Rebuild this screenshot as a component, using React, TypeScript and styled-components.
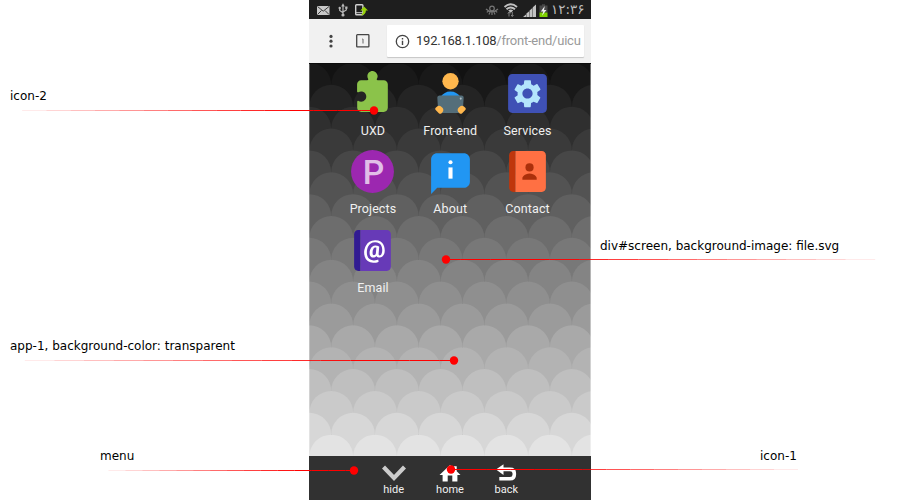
import React from 'react';
import styled, { createGlobalStyle } from 'styled-components';
import {
  FcPuzzle,
  FcReadingEbook,
  FcAutomatic,
  FcAbout,
  FcContacts,
  FcAddressBook,
} from 'react-icons/fc';

const GlobalStyle = createGlobalStyle`
  body { margin: 0; background: #fff; overflow: hidden; }
`;

const Page = styled.main`
  position: relative;
  display: flex;
  justify-content: center;
  width: 900px;
  height: 500px;
  background: #fff;
`;

const Phone = styled.section`
  isolation: isolate;
  display: flex;
  flex-direction: column;
  width: 282px;
  height: 500px;
`;

const StatusBar = styled.header`
  display: flex;
  justify-content: space-between;
  height: 19px;
  background: #1e1e1e;
`;

const StatusIcons = styled.svg`
  display: block;
  height: 19px;
`;

const StatusRight = styled.div`
  display: flex;
  padding-right: 8px;
`;

const Clock = styled.span`
  width: 32px;
  margin-left: 3px;
  font: 13.5px/18px 'DejaVu Sans', sans-serif;
  letter-spacing: -0.9px;
  color: #bdbdbd;
  text-align: right;
  white-space: nowrap;
`;

const BrowserBar = styled.div`
  display: flex;
  align-items: center;
  box-sizing: border-box;
  height: 45px;
  padding: 0 6px 0 13px;
  background: #f1f1f1;
  border-bottom: 1px solid #0c0c0c;
  font-family: Roboto, sans-serif;
`;

const BrowserIcon = styled.svg<{ $gap: number }>`
  display: block;
  flex: none;
  margin-right: ${(p) => p.$gap}px;
`;

const AddressBox = styled.div`
  display: flex;
  align-items: center;
  box-sizing: border-box;
  width: 197px;
  height: 32px;
  padding: 0 5px 0 8px;
  background: #fff;
  border-radius: 1px;
  box-shadow: 0 1px 1px rgba(0, 0, 0, 0.18);
`;

const Url = styled.span`
  flex: 1;
  font-size: 13px;
  letter-spacing: -0.23px;
  line-height: 18px;
  white-space: nowrap;
  color: #9a9a9a;
`;

const Host = styled.span`
  color: #333;
`;

const Screen = styled.div`
  display: grid;
  height: 392px;
  overflow: hidden;
`;

const Wallpaper = styled.svg`
  grid-area: 1 / 1;
  display: block;
`;

const AppGrid = styled.div`
  grid-area: 1 / 1;
  z-index: 1;
  display: grid;
  grid-template-columns: repeat(3, 77.3px);
  grid-auto-rows: 78.4px;
  align-content: start;
  padding: 4.8px 0 0 25.3px;
  font-family: Roboto, sans-serif;
`;

const AppTile = styled.div`
  display: flex;
  flex-direction: column;
  align-items: center;

  svg { display: block; flex: none; }
`;

const AppLabel = styled.span`
  margin-top: 5px;
  font-size: 12.5px;
  letter-spacing: 0.1px;
  line-height: 16px;
  color: #f0f0f0;
`;

const MenuBar = styled.nav`
  display: flex;
  justify-content: center;
  height: 44px;
  background: #313131;
  font-family: Roboto, sans-serif;
`;

const MenuItem = styled.div`
  display: flex;
  flex-direction: column;
  align-items: center;
  width: 56.3px;
  padding-top: 8px;
`;

const MenuLabel = styled.span`
  margin-top: 1px;
  font-size: 11px;
  line-height: 14px;
  color: #f0f0f0;
`;

const Note = styled.span<{ $x: number; $y: number }>`
  position: absolute;
  left: ${(p) => p.$x}px;
  top: ${(p) => p.$y}px;
  font: 12px/14px 'DejaVu Sans', sans-serif;
  color: #000;
  white-space: nowrap;
`;

const Pointer = styled.svg`
  position: absolute;
  inset: 0;
`;

const ROWS = 18;
const PITCH = 21.87;
const RADIUS = 21.9;
const SHADES = [
  '#e3e3e3', '#d7d7d7', '#cacaca', '#bfbfbf', '#b3b3b3', '#a9a9a9',
  '#9b9b9b', '#8f8f8f', '#848484', '#787878', '#6d6d6d', '#606060',
  '#535353', '#474747', '#3a3a3a', '#2f2f2f', '#242424', '#191919',
];

function Scales() {
  const circles: React.ReactNode[] = [];
  for (let row = ROWS - 1; row >= 0; row--) {
    const cy = 370.7 - row * PITCH + RADIUS;
    const first = row % 2 === 0 ? -21.5 : 0.3;
    for (let i = 0; i < 8; i++) {
      circles.push(
        <circle key={`${row}-${i}`} cx={first + i * 43.75} cy={cy} r={RADIUS} fill={SHADES[row]} />,
      );
    }
  }
  return (
    <Wallpaper width="282" height="392" viewBox="0 0 282 392">
      <rect width="282" height="392" fill="#121212" />
      {circles}
      <rect width="1" height="392" fill="#fff" opacity="0.3" />
      <rect x="281" width="1" height="392" fill="#fff" opacity="0.4" />
    </Wallpaper>
  );
}

function ProjectsIcon() {
  return (
    <svg width="49" height="49" viewBox="0 0 48 48">
      <circle cx="24" cy="24" r="21" fill="#9c27b0" />
      <text x="25" y="35.9" textAnchor="middle" fontFamily="Roboto" fontWeight="500" fontSize="33" fill="#e1bee7">P</text>
    </svg>
  );
}

const apps = [
  { label: 'UXD', icon: <FcPuzzle size={49} /> },
  { label: 'Front-end', icon: <FcReadingEbook size={49} /> },
  { label: 'Services', icon: <FcAutomatic size={49} /> },
  { label: 'Projects', icon: <ProjectsIcon /> },
  { label: 'About', icon: <FcAbout size={49} /> },
  { label: 'Contact', icon: <FcContacts size={49} /> },
  { label: 'Email', icon: <FcAddressBook size={49} /> },
];

const menu = [
  {
    label: 'hide',
    icon: <path d="M1.5 3 L12 14 L22.5 3" fill="none" stroke="#ccc" strokeWidth="4.2" />,
  },
  {
    label: 'home',
    icon: (
      <path d="M12 1 L15.8 4.6 V2.2 H18.7 V7.3 L22.5 11 H19.4 V17.5 H14.3 V11.5 H9.7 V17.5 H4.6 V11 H1.5 Z" fill="#fff" />
    ),
  },
  {
    label: 'back',
    icon: (
      <>
        <path d="M8 5.4 H16 Q20.3 5.4 20.3 9.3 V10.8 Q20.3 14.8 16 14.8 H5.3" fill="none" stroke="#fff" strokeWidth="3.6" />
        <path d="M2 5.6 L9.5 0.3 V11 Z" fill="#fff" />
      </>
    ),
  },
];

const notes = [
  { text: 'icon-2', x: 10, y: 89, from: 10, to: 374, line: 110.5 },
  { text: 'div#screen, background-image: file.svg', x: 600, y: 239, from: 890, to: 446, line: 259.5 },
  { text: 'app-1, background-color: transparent', x: 10, y: 339, from: 10, to: 454, line: 360.5 },
  { text: 'menu', x: 100, y: 449, from: 100, to: 354, line: 470.5 },
  { text: 'icon-1', x: 760, y: 449, from: 810, to: 451, line: 469.5 },
];

// Each leader line fades out toward its caption in equal, discrete steps.
const STEPS = 15;
const fade = Array.from({ length: STEPS }, (_, i) => i + 1);

export default function App() {
  return (
    <Page>
      <GlobalStyle />
      <Phone>
        <StatusBar>
          <StatusIcons width="65" height="19" viewBox="0 0 65 19">
            <rect x="8" y="6" width="12.5" height="9" fill="#c9c9c9" />
            <path d="M8.5 6.5 L14.2 11.2 L20 6.5 M8.5 14.5 L12.5 10.5 M20 14.5 L16 10.5" fill="none" stroke="#3c3c3c" strokeWidth="1" />
            <path d="M34 5 V15 M30.7 8 V10.5 L34 12.7 M37.3 7.5 V10 L34 12" fill="none" stroke="#b8b8b8" strokeWidth="1.2" />
            <path d="M32.2 6.4 L34 3.3 L35.8 6.4 Z" fill="#b8b8b8" />
            <circle cx="34" cy="15" r="1.6" fill="#b8b8b8" />
            <circle cx="30.7" cy="8" r="1.2" fill="#b8b8b8" />
            <rect x="36.2" y="6.5" width="2.3" height="2.3" fill="#b8b8b8" />
            <rect x="46.7" y="4.7" width="7.2" height="10" rx="0.8" fill="none" stroke="#d0d0d0" strokeWidth="1.4" />
            <path d="M47 12.7 H54" stroke="#d0d0d0" strokeWidth="1" />
            <path d="M55 6.5 L59 10.5 H56.9 C57 13.5 55 15.2 51.5 15.5 C53.7 14.1 54 12.5 53.9 10.5 H51.4 Z" fill="#99d30b" />
          </StatusIcons>
          <StatusRight>
            <StatusIcons width="65" height="19" viewBox="0 0 65 19">
              <path d="M3 9 Q9 14.5 15 9 M3.8 12.4 L5.5 11 M9 15 V12 M14.2 12.4 L12.5 11 M6 14.4 L7 12 M12 14.4 L11 12" fill="none" stroke="#777" strokeWidth="1.2" />
              <circle cx="9" cy="8.5" r="2.3" fill="none" stroke="#777" strokeWidth="1.2" />
              <path d="M21.5 7 Q27.7 1.5 34 7 M23.5 9.3 Q27.7 5.5 32 9.3" fill="none" stroke="#c2c2c2" strokeWidth="1.9" />
              <path d="M25.3 10.5 Q27.7 8.4 30.2 10.5 L27.7 12.8 Z" fill="#c2c2c2" />
              <path d="M26 16.5 V12.2 M24.8 13.5 L26 12 L27.2 13.5 M29.3 12 V16.3 M28.1 15 L29.3 16.5 L30.5 15" fill="none" stroke="#888" strokeWidth="0.9" />
              <path d="M40 17 L43 14.4 V17 Z M43.4 17 V13.5 L46.2 11.2 V17 Z M46.6 17 V10.5 L49.4 8 V17 Z M49.8 17 V7.3 L53 4.5 V17 Z" fill="#c2c2c2" />
              <path d="M56.5 5.5 H59 V4.3 H62 V5.5 H64.5 V12.5 H56.5 Z" fill="#484848" />
              <rect x="56.5" y="12.5" width="8" height="4.5" fill="#7ed000" />
              <path d="M61.8 6 L57.8 11.5 H60.2 L59 15.8 L63.4 10 H61 Z" fill="#eee" />
            </StatusIcons>
            <Clock>۱۲:۳۶</Clock>
          </StatusRight>
        </StatusBar>
        <BrowserBar>
          <BrowserIcon $gap={16} width="18" height="18" viewBox="0 0 18 18">
            <circle cx="9" cy="4.4" r="1.6" fill="#444" />
            <circle cx="9" cy="9.2" r="1.6" fill="#444" />
            <circle cx="9" cy="14" r="1.6" fill="#444" />
          </BrowserIcon>
          <BrowserIcon $gap={17} width="14" height="14" viewBox="0 0 14 14">
            <rect x="0.7" y="0.7" width="12.2" height="12.2" rx="0.7" fill="none" stroke="#444" strokeWidth="1.3" />
            <path d="M6.3 5 H7 V9.5" fill="none" stroke="#666" strokeWidth="1" />
          </BrowserIcon>
          <AddressBox>
            <BrowserIcon $gap={6} width="15" height="15" viewBox="0 0 15 15">
              <circle cx="7.5" cy="7.5" r="6.2" fill="none" stroke="#444" strokeWidth="1.3" />
              <path d="M7.5 4 V5.4 M7.5 6.7 V11" stroke="#444" strokeWidth="1.4" />
            </BrowserIcon>
            <Url><Host>192.168.1.108</Host>/front-end/uicu</Url>
          </AddressBox>
        </BrowserBar>
        <Screen>
          <Scales />
          <AppGrid>
            {apps.map((app) => (
              <AppTile key={app.label}>
                {app.icon}
                <AppLabel>{app.label}</AppLabel>
              </AppTile>
            ))}
          </AppGrid>
        </Screen>
        <MenuBar>
          {menu.map((item) => (
            <MenuItem key={item.label}>
              <svg width="24" height="18" viewBox="0 0 24 18">{item.icon}</svg>
              <MenuLabel>{item.label}</MenuLabel>
            </MenuItem>
          ))}
        </MenuBar>
      </Phone>
      <Pointer width="900" height="500" viewBox="0 0 900 500">
        {notes.map((n) => {
          const step = (n.to - n.from) / STEPS;
          return (
            <g key={n.text} fill="#f00">
              {fade.map((i) => {
                const start = n.from + step * (i - 0.5);
                const end = i === STEPS ? n.to : start + step;
                return (
                  <rect
                    key={i}
                    x={Math.min(start, end)}
                    y={n.line - 0.5}
                    width={Math.abs(end - start)}
                    height="1"
                    opacity={Math.min(1, i / 12)}
                  />
                );
              })}
              <circle cx={n.to} cy={n.line} r="4.2" />
            </g>
          );
        })}
      </Pointer>
      {notes.map((n) => (
        <Note key={n.text} $x={n.x} $y={n.y}>{n.text}</Note>
      ))}
    </Page>
  );
}
